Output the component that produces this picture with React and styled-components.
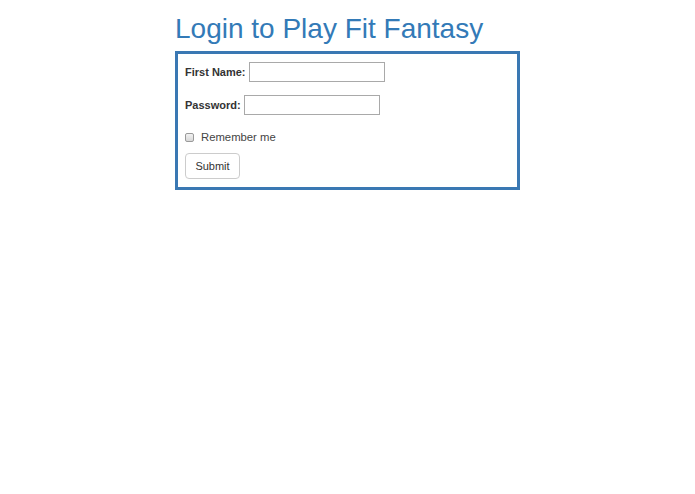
import React from 'react';
import { createGlobalStyle, styled } from 'styled-components';

const GlobalStyle = createGlobalStyle`
  body {
    margin: 0;
    background: #fff;
    font-family: "Liberation Sans", Arial, Helvetica, sans-serif;
    color: #333;
  }
`;

const App = () => {
  const onSubmit = (e) => {
    e.preventDefault();
  };

  return (
    <>
      <GlobalStyle />
      <St.Page>
        <St.Title>Login to Play Fit Fantasy</St.Title>
        <St.Form onSubmit={onSubmit}>
          <St.Row>
            <St.Label htmlFor="firstName">First Name:</St.Label>
            <St.Input id="firstName" type="text" />
          </St.Row>
          <St.Row>
            <St.Label htmlFor="password">Password:</St.Label>
            <St.Input id="password" type="password" />
          </St.Row>
          <St.CheckRow>
            <St.Checkbox type="checkbox" id="remember" />
            <label htmlFor="remember">Remember me</label>
          </St.CheckRow>
          <St.Button type="submit">Submit</St.Button>
        </St.Form>
      </St.Page>
    </>
  );
};

export default App;

const St = {
  Page: styled.div`
    width: 345px;
    margin: 0 auto;
    padding-top: 12px;
  `,

  Title: styled.h1`
    margin: 0 0 5px;
    font-size: 28px;
    font-weight: 400;
    line-height: 34px;
    color: #337ab7;
  `,

  Form: styled.form`
    display: flex;
    flex-direction: column;
    align-items: flex-start;
    border: 3px solid #3a78b3;
    padding: 8px 8px 8px 7px;
  `,

  Row: styled.div`
    display: flex;
    align-items: center;
    gap: 3px;
    margin-bottom: 13px;
  `,

  Label: styled.label`
    font-size: 11px;
    font-weight: 700;
    color: #333;
  `,

  Input: styled.input`
    width: 136px;
    height: 20px;
    box-sizing: border-box;
    border: 1px solid #a9a9a9;
    padding: 1px 2px;
    font-size: 12px;
  `,

  CheckRow: styled.div`
    display: flex;
    align-items: center;
    gap: 7px;
    font-size: 11.3px;
    color: #444;
    margin-top: 3px;
    margin-bottom: 10px;
  `,

  Checkbox: styled.input`
    appearance: none;
    width: 9px;
    height: 9px;
    margin: 0;
    border: 1px solid #9a9a9a;
    border-radius: 2px;
    background: linear-gradient(#f2f2f2, #d8d8d8);
  `,

  Button: styled.button`
    height: 26px;
    width: 55px;
    padding: 0;
    border: 1px solid #ccc;
    border-radius: 4px;
    background: #fff;
    color: #333;
    font-family: "Liberation Sans", Arial, sans-serif;
    font-size: 11px;
  `
};
